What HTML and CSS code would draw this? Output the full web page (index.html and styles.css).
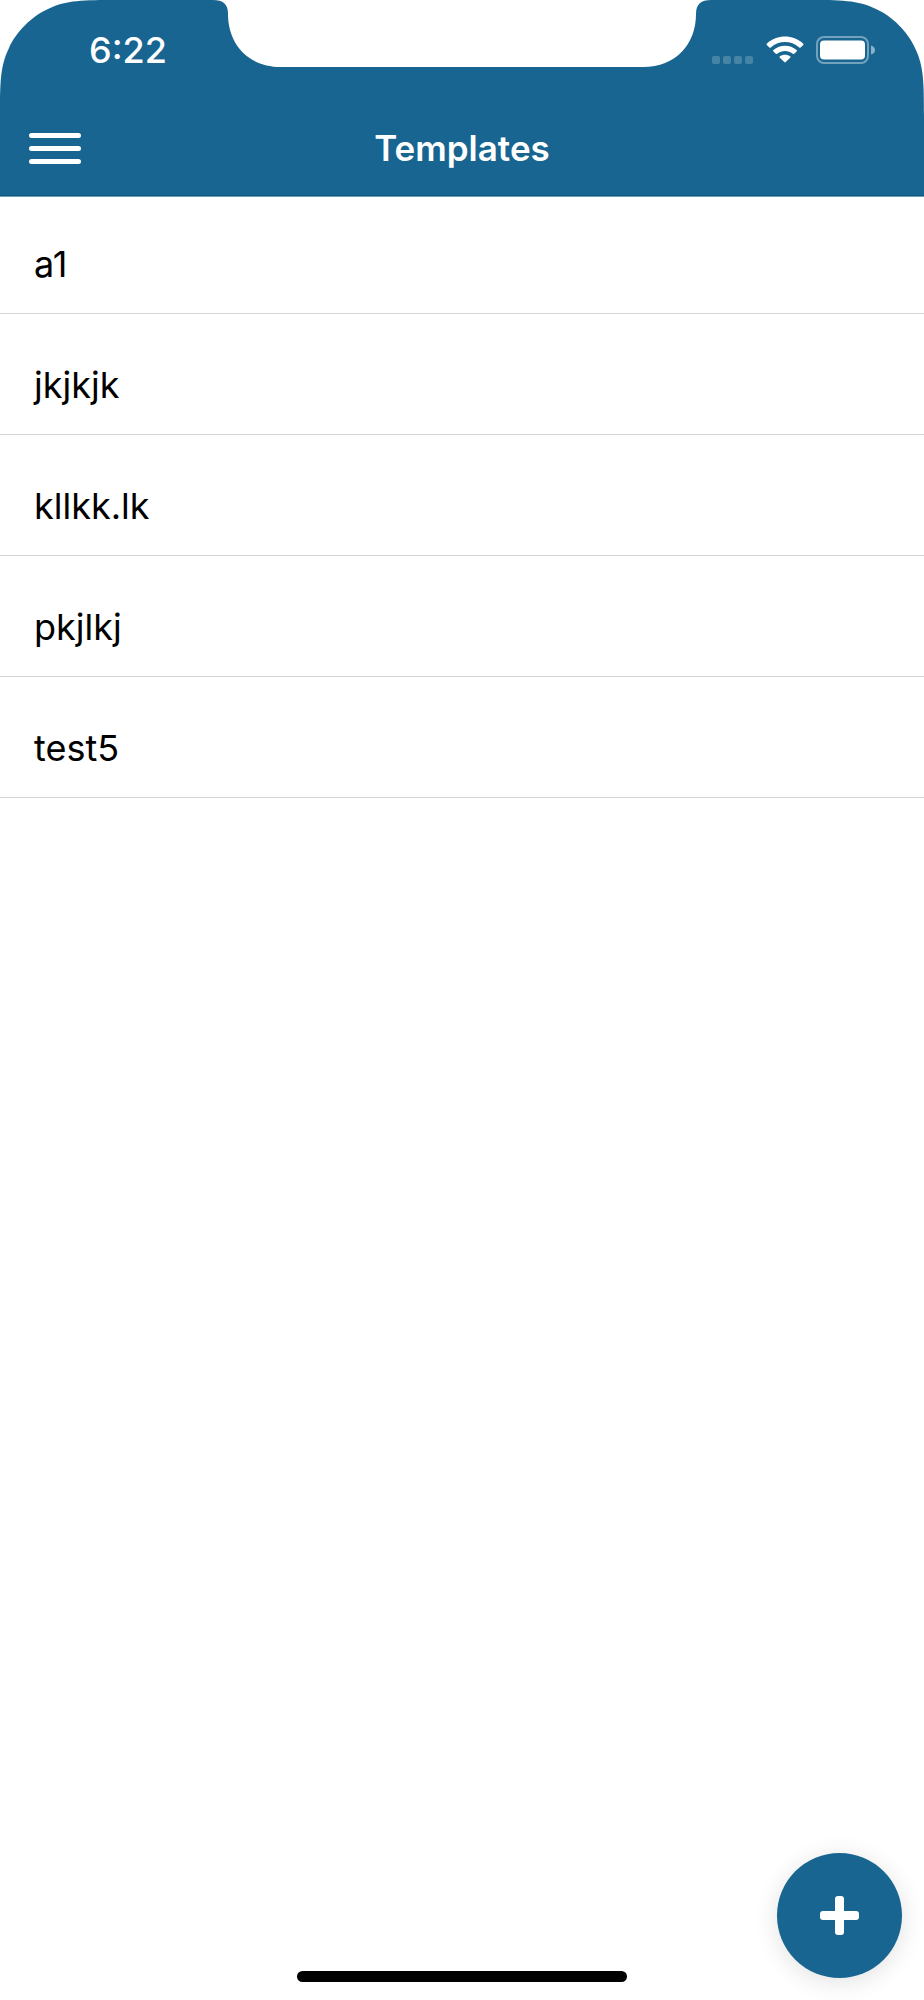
FILE: index.html
```html
<!DOCTYPE html>
<html lang="en">
<head>
    <meta charset="UTF-8">
    <meta name="viewport" content="width=device-width,initial-scale=1">
    <title>Templates</title>
    <link rel="stylesheet" href="styles.css">
</head>
<body>
<header class="app-header">
    <!-- Screen corners and notch -->
    <svg class="corner corner-left" viewBox="0 0 116 116" aria-hidden="true"><path d="M0 0H116C84 0 66 0 48 9C32 16 16 32 9 48C0 66 0 84 0 116Z"/></svg>
    <svg class="corner corner-right" viewBox="0 0 116 116" aria-hidden="true"><path d="M0 0H116C84 0 66 0 48 9C32 16 16 32 9 48C0 66 0 84 0 116Z"/></svg>
    <svg class="notch" viewBox="0 0 498 67" aria-hidden="true"><path d="M0 0C10 0 15 4 15 14C15 44 35 67 68 67H430C463 67 483 44 483 14C483 4 488 0 498 0Z"/></svg>

    <div class="status-bar">
        <time class="clock">6:22</time>
        <div class="indicators">
            <svg class="signal" viewBox="0 0 42 28" role="img" aria-label="No signal">
                <rect x="0" y="20" width="8" height="8" rx="2"/>
                <rect x="11" y="20" width="8" height="8" rx="2"/>
                <rect x="22" y="20" width="8" height="8" rx="2"/>
                <rect x="33" y="20" width="8" height="8" rx="2"/>
            </svg>
            <svg class="wifi" viewBox="0 0 38 28" role="img" aria-label="Wi-Fi">
                <path d="M1 9.2Q0 8.3 1 7.4C11-1.8 27-1.8 37 7.4Q38 8.3 37 9.2L34.6 11.5Q34 12 33.2 11.4C25 4.2 13 4.2 4.8 11.4Q4 12 3.4 11.5Z"/>
                <path d="M7.4 15.4Q6.6 14.7 7.4 13.9C14 8.2 24 8.2 30.6 13.9Q31.4 14.7 30.6 15.4L28.2 17.7Q27.6 18.3 26.8 17.7C22 14 16 14 11.2 17.7Q10.4 18.3 9.8 17.7Z"/>
                <path d="M13.8 21.7Q13 21 13.9 20.3C17 18.3 21 18.3 24.1 20.3Q25 21 24.2 21.7L19.7 26.1Q19 26.8 18.3 26.1Z"/>
            </svg>
            <svg class="battery" viewBox="0 0 60 28" role="img" aria-label="Battery full">
                <rect class="battery-case" x="1" y="1" width="51" height="26" rx="7"/>
                <rect x="4" y="4.5" width="45" height="19" rx="4"/>
                <path class="battery-tip" d="M55 9.5Q59 10.5 59 14T55 18.5Z"/>
            </svg>
        </div>
    </div>

    <nav class="nav-bar">
        <button class="menu-btn" type="button" aria-label="Open menu">
            <svg viewBox="0 0 52 32" aria-hidden="true"><path d="M2.5 3.5H49.5M2.5 16.5H49.5M2.5 29.5H49.5"/></svg>
        </button>
        <h1>Templates</h1>
    </nav>
</header>

<main>
    <ul class="template-list">
        <li><a href="#a1">a1</a></li>
        <li><a href="#jkjkjk">jkjkjk</a></li>
        <li><a href="#kllkk">kllkk.lk</a></li>
        <li><a href="#pkjlkj">pkjlkj</a></li>
        <li><a href="#test5">test5</a></li>
    </ul>
</main>

<button class="fab" type="button" aria-label="Add template">
    <svg viewBox="0 0 39 39" aria-hidden="true"><rect x="15" y="0" width="9" height="39" rx="3"/><rect x="0" y="15" width="39" height="9" rx="3"/></svg>
</button>
<div class="home-indicator"></div>
</body>
</html>
```
FILE: styles.css
```css
:root{
    --c-primary:#176590;
    --c-primary-dark:#0f5681;
    --c-line:#d4d4d4;
}
*{box-sizing:border-box;padding:0;margin:0}
body{background:#fff;color:#000;font-family:Inter,"Liberation Sans",sans-serif;min-height:100vh;display:flex;flex-direction:column}
button{border:none;background:none;cursor:pointer}
svg{display:block;fill:#fff}

.app-header{position:relative;background:var(--c-primary);color:#fff;border-bottom:1px solid #719fba;box-shadow:inset 0 -1px var(--c-primary-dark)}
.corner{position:absolute;top:0;width:116px;height:116px}
.corner-left{left:0}
.corner-right{right:0;transform:scaleX(-1)}
.notch{position:absolute;top:0;left:50%;width:498px;margin-left:-249px}

.status-bar{position:relative;height:100px;padding:0 48px 0 89px;display:flex;align-items:center;justify-content:space-between}
.clock{font-size:36px;line-height:40px;font-weight:500}
.indicators{display:flex;align-items:center;gap:12px}
.signal{width:42px;opacity:.2}
.wifi{width:38px}
.battery{width:60px}
.battery-case{fill:none;stroke:#fff;stroke-width:2;opacity:.4}
.battery-tip{opacity:.5}

.nav-bar{height:96px;padding:0 29px;display:grid;grid-template-columns:1fr auto 1fr;align-items:center}
.menu-btn{width:52px;height:32px}
.menu-btn svg{fill:none;stroke:#fff;stroke-width:5;stroke-linecap:round}
h1{font-size:35px;line-height:44px;font-weight:600}

main{flex:1}
.template-list{list-style:none}
.template-list a{display:block;padding:49px 34px 27px;border-bottom:1px solid var(--c-line);color:inherit;text-decoration:none;font-size:36px;line-height:44px}
.template-list li:first-child a{padding-top:45px}

.fab{position:fixed;right:22px;bottom:22px;width:125px;height:125px;border-radius:50%;background:var(--c-primary);box-shadow:0 4px 24px rgba(0,0,0,.12);display:grid;place-items:center}
.fab svg{width:39px}
.home-indicator{width:330px;height:11px;margin:0 auto 18px;border-radius:6px;background:#000}
```
